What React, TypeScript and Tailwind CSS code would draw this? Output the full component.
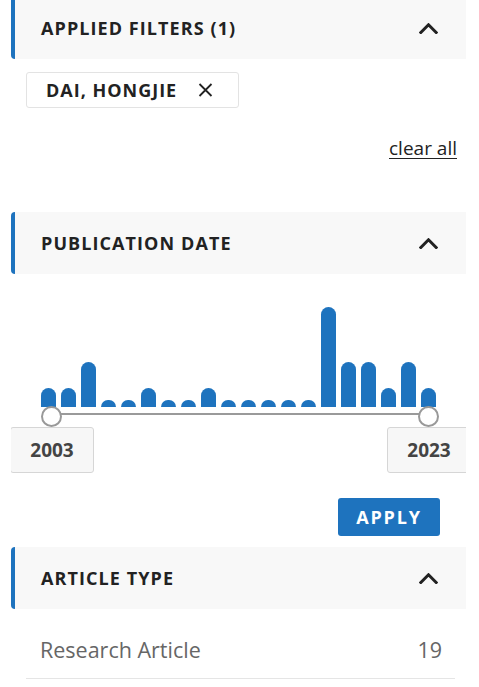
import React from "react";

const BAR_HEIGHTS = [19, 19, 45, 7, 7, 19, 7, 7, 19, 7, 7, 7, 7, 7, 100, 45, 45, 19, 45, 19];

const Chevron: React.FC = () => (
  <svg width="19" height="11" viewBox="0 0 19 11" fill="none" className="shrink-0">
    <polyline points="1.8,9.5 9.5,1.8 17.2,9.5" stroke="#222" strokeWidth="3" strokeLinecap="square" />
  </svg>
);

const SectionHeader: React.FC<{ title: string; className?: string }> = ({ title, className = "" }) => (
  <div
    className={`flex h-[62px] items-center justify-between rounded-l-[4px] border-l-4 border-[#1e73be] bg-[#f8f8f8] pl-[26px] pr-[28px] ${className}`}
  >
    <span className="text-[18px] font-bold uppercase tracking-[0.06em] text-[#222]">{title}</span>
    <Chevron />
  </div>
);

export default function App() {
  return (
    <div className="h-[687px] w-[479px] overflow-hidden bg-white font-['Open_Sans',sans-serif]">
      <div className="ml-[11px] w-[455px]">
        {/* Applied filters */}
        <SectionHeader title="Applied Filters (1)" className="-mt-[3px]" />

        <div className="ml-[15px] mt-[13px] flex h-[36px] w-[213px] items-center rounded-[3px] border border-[#e3e3e3] pl-[19px]">
          <span className="text-[18px] font-bold tracking-[0.055em] text-[#222]">DAI, HONGJIE</span>
          <svg width="15" height="14" viewBox="0 0 15 14" className="ml-[21px]">
            <path d="M1.5 1 L13.5 13 M13.5 1 L1.5 13" stroke="#222" strokeWidth="1.8" />
          </svg>
        </div>

        <div className="mr-[9px] mt-[27px] flex justify-end">
          <a className="text-[19px] leading-[26px] text-[#222] underline underline-offset-[3px]">clear all</a>
        </div>

        {/* Publication date */}
        <SectionHeader title="Publication Date" className="mt-[51px]" />

        <div className="relative h-[200px] overflow-hidden pt-[33px]">
          <div className="flex h-[100px] items-end gap-[5px] pl-[30px]">
            {BAR_HEIGHTS.map((h, i) => (
              <div key={i} className="w-[15px] rounded-t-full bg-[#1e73be]" style={{ height: h }} />
            ))}
          </div>
          <div className="ml-[41px] mr-[37px] mt-[6px] h-[2px] bg-[#9a9a9a]" />
          <div className="absolute left-[30px] top-[132px] h-[21px] w-[21px] rounded-full border-2 border-[#999] bg-white" />
          <div className="absolute right-[27px] top-[132px] h-[21px] w-[21px] rounded-full border-2 border-[#999] bg-white" />
          <div className="absolute -left-[1px] top-[153px] flex h-[46px] w-[84px] items-center justify-center rounded-[3px] border border-[#d6d6d6] bg-[#f7f7f7] text-[19px] font-bold text-[#444]">
            2003
          </div>
          <div className="absolute -right-[5px] top-[153px] flex h-[46px] w-[84px] items-center justify-center rounded-[3px] border border-[#d6d6d6] bg-[#f7f7f7] text-[19px] font-bold text-[#444]">
            2023
          </div>
        </div>

        <div className="mt-[24px] flex justify-end pr-[26px]">
          <button className="flex h-[38px] w-[102px] items-center justify-center rounded-[3px] bg-[#1e73be] text-[18px] font-bold tracking-[0.1em] text-white">
            APPLY
          </button>
        </div>

        {/* Article type */}
        <SectionHeader title="Article Type" className="mt-[11px]" />

        <div className="ml-[15px] mr-[11px] flex h-[70px] items-center justify-between border-b border-[#e5e5e5] pl-[14px] pr-[13px] pt-[14px]">
          <span className="text-[21.5px] text-[#666]">Research Article</span>
          <span className="text-[21.5px] text-[#666]">19</span>
        </div>
      </div>
    </div>
  );
}
